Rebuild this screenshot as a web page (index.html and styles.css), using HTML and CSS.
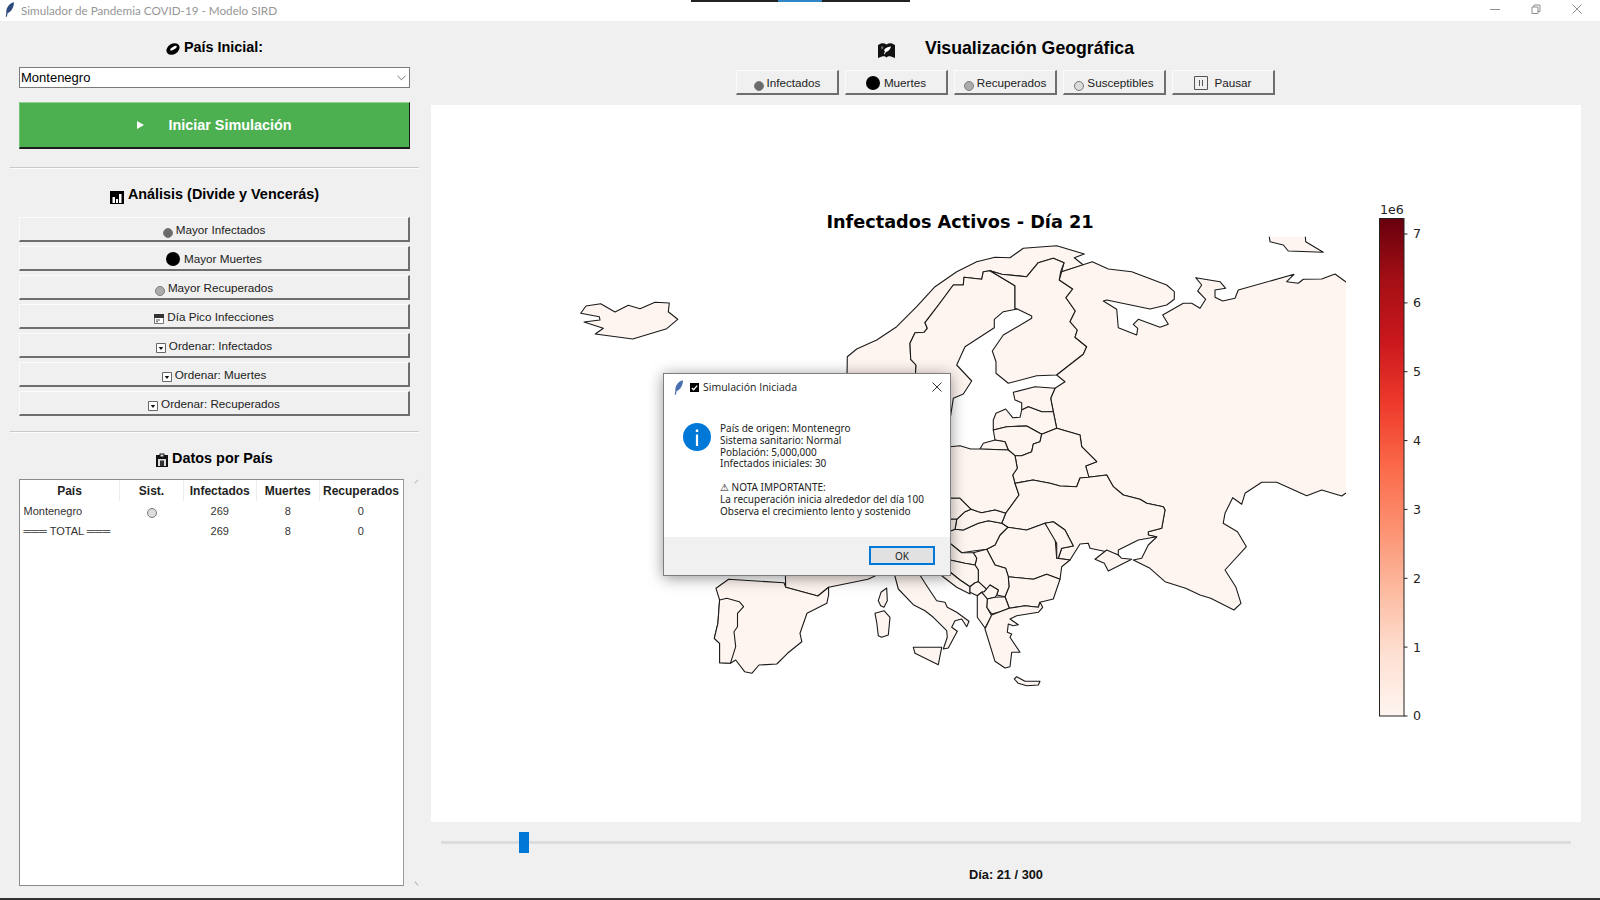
FILE: index.html
```html
<!DOCTYPE html>
<html lang="es">
<head>
<meta charset="utf-8">
<title>Simulador de Pandemia COVID-19 - Modelo SIRD</title>
<link rel="stylesheet" href="styles.css">
</head>
<body>
<div class="app">
  <header class="titlebar">
    <svg class="feather" viewBox="0 0 10 16"><path d="M10 0C5 1 1 6 1.500 11.500L.8 16 2 16 3 12C7 11 10 5 10 0Z"/></svg>
    <span class="titlebar-text">Simulador de Pandemia COVID-19 - Modelo SIRD</span>
    <div class="taskstrip"><span class="taskstrip-blue"></span></div>
    <div class="winctl">
      <svg class="winbtn" viewBox="0 0 10 10"><path d="M0 5.500H10"/></svg>
      <svg class="winbtn" viewBox="0 0 10 10"><path d="M1 3H7V9.500H1ZM3 3V1H9V7.500H7"/></svg>
      <svg class="winbtn" viewBox="0 0 10 10"><path d="M.5 .5L9.500 9.500M9.500 .5L.5 9.500"/></svg>
    </div>
  </header>

  <main class="main">
    <aside class="left">
      <h2 class="head head-first">
        <svg class="ico-head" viewBox="0 0 14 14"><ellipse cx="7" cy="7" rx="7" ry="5.200" fill="#000" transform="rotate(-32 7 7)"/><ellipse cx="7.500" cy="6.200" rx="3.800" ry="1.300" fill="#fff" transform="rotate(-32 7.500 6.200)"/></svg>
        <span>País Inicial:</span>
      </h2>
      <div class="combo"><span>Montenegro</span><svg class="combo-arrow" viewBox="0 0 10 6"><path d="M.5 .5L5 5L9.500 .5"/></svg></div>
      <button class="start"><span class="start-arrow"></span><span>Iniciar Simulación</span></button>
      <div class="sep sep-a"></div>
      <h2 class="head">
        <svg class="ico-head ico-low" viewBox="0 0 14 14"><path d="M0 1H14V14H0Z" fill="#000"/><path d="M2.500 7H5V13H2.500ZM6 9H8V13H6ZM9 4H11.500V13H9Z" fill="#fff"/></svg>
        <span>Análisis (Divide y Vencerás)</span>
      </h2>
      <div class="btn-list">
        <button class="raised"><i class="dot dot-inf"></i><span>Mayor Infectados</span></button>
        <button class="raised"><i class="dot dot-mue"></i><span>Mayor Muertes</span></button>
        <button class="raised"><i class="dot dot-rec"></i><span>Mayor Recuperados</span></button>
        <button class="raised">
          <svg class="ico-small" viewBox="0 0 10 10"><path d="M.5 .5H9.500V9.500H.5Z" fill="#fff" stroke="#777"/><path d="M0 0H10V4H0Z" fill="#333"/><path d="M2 6H6M2 7.800H4" stroke="#555"/></svg>
          <span>Día Pico Infecciones</span>
        </button>
        <button class="raised"><svg class="ico-small" viewBox="0 0 10 10"><path d="M.5 .5H9.500V9.500H.5Z" fill="#fff" stroke="#666"/><path d="M2.800 4H7.200L5 7Z" fill="#111"/></svg><span>Ordenar: Infectados</span></button>
        <button class="raised"><svg class="ico-small" viewBox="0 0 10 10"><path d="M.5 .5H9.500V9.500H.5Z" fill="#fff" stroke="#666"/><path d="M2.800 4H7.200L5 7Z" fill="#111"/></svg><span>Ordenar: Muertes</span></button>
        <button class="raised"><svg class="ico-small" viewBox="0 0 10 10"><path d="M.5 .5H9.500V9.500H.5Z" fill="#fff" stroke="#666"/><path d="M2.800 4H7.200L5 7Z" fill="#111"/></svg><span>Ordenar: Recuperados</span></button>
      </div>
      <div class="sep sep-b"></div>
      <h2 class="head">
        <svg class="ico-head ico-clip" viewBox="0 0 12 14"><path d="M0 2H3.500V.5H8.500V2H12V14H0Z" fill="#111"/><path d="M4.500 1.500H7.500V3.500H4.500ZM2 6H10V13H2Z" fill="#ddd"/><path d="M4 7.500H8V13H4Z" fill="#333"/></svg>
        <span>Datos por País</span>
      </h2>
      <div class="tree">
        <table class="tree-table">
          <colgroup><col class="c1"><col class="c2"><col class="c3"><col class="c4"><col class="c5"></colgroup>
          <thead>
            <tr><th>País</th><th>Sist.</th><th>Infectados</th><th>Muertes</th><th>Recuperados</th></tr>
          </thead>
          <tbody>
            <tr><td class="name">Montenegro</td><td><i class="dot dot-sus dot-cell"></i></td><td>269</td><td>8</td><td>0</td></tr>
            <tr><td class="name">═══ TOTAL ═══</td><td></td><td>269</td><td>8</td><td>0</td></tr>
          </tbody>
        </table>
      </div>
      <i class="grip grip-top"></i>
      <i class="grip grip-bottom"></i>
    </aside>

    <section class="right">
      <h1 class="geo-title">
        <svg class="ico-map" viewBox="0 0 17 15"><path d="M0 2L3 0.500C5 0 7 .5 8.500 1.500C10 .5 12 0 14 .5L17 2V15L13 13.500C11 13 9.500 13.500 8.500 14.500C7.500 13.500 6 13 4 13.500L0 15Z" fill="#111"/><path d="M6 7C8 4 11 3.500 13 3.500C12.500 6 10.500 8.500 8 9L6.500 11.500L6 10.500L7 8.500Z" fill="#fff"/><path d="M3 3.500H5.500L5 6H3.500Z" fill="#777"/></svg>
        <span>Visualización Geográfica</span>
      </h1>
      <div class="tabs">
        <button class="raised tab"><i class="dot dot-inf"></i><span>Infectados</span></button>
        <button class="raised tab"><i class="dot dot-mue"></i><span>Muertes</span></button>
        <button class="raised tab"><i class="dot dot-rec"></i><span>Recuperados</span></button>
        <button class="raised tab"><i class="dot dot-sus"></i><span>Susceptibles</span></button>
        <button class="raised tab"><svg class="ico-pause" viewBox="0 0 14 14"><path d="M.5 .5H13.500V13.500H.5Z" fill="none" stroke="#555"/><path d="M5.500 4V10M8.500 4V10" stroke="#555"/></svg><span>Pausar</span></button>
      </div>
      <div class="canvas">
        <svg class="map" viewBox="431 105 1150 717">
          <defs>
            <clipPath id="mapclip"><rect x="431" y="236.700" width="915" height="500"/></clipPath>
            <linearGradient id="reds" x1="0" y1="1" x2="0" y2="0">
              <stop offset="0" stop-color="#fff5f0"/><stop offset=".125" stop-color="#fee0d2"/>
              <stop offset=".25" stop-color="#fcbba1"/><stop offset=".375" stop-color="#fc9272"/>
              <stop offset=".5" stop-color="#fb6a4a"/><stop offset=".625" stop-color="#ef3b2c"/>
              <stop offset=".75" stop-color="#cb181d"/><stop offset=".875" stop-color="#a50f15"/>
              <stop offset="1" stop-color="#67000d"/>
            </linearGradient>
          </defs>
          <text class="chart-title" x="960" y="228" text-anchor="middle">Infectados Activos - Día 21</text>
          <g class="land" clip-path="url(#mapclip)">
            <polygon points="580.7,313.3 586,306 600.7,303.700 615,312 628.300,305.300 640,308.700 655,302.300 669.300,303 668.300,311.700 677.700,319.300 666.700,328.700 632.700,339 595.300,334 603.300,328.300 584,322 600,320 599.300,316.700"/>
            <polygon points="846.700,400 847.300,356.700 856.700,349 876.700,340 896.700,326.700 916.700,306.700 935,286.700 956.700,271.700 976.700,261.700 995,257.300 1010,257.700 1023.300,248.300 1056.700,245.700 1084.300,254 1074.300,257.700 1083.300,265 1061.700,271.700 1064,262.700 1053.300,258.300 1038.300,262.700 1026.700,276.700 1001.700,274.300 990,270.700 983.300,271.700 981.700,279.300 964,277.300 963.300,285 953.300,285 940,303 925,322.700 927.300,328.300 924,332.300 915,332.700 910,343.300 910.700,359.300 916,365 914,400"/>
            <polygon points="914,420 914,400 916,365 910.700,359.300 910,343.300 915,332.700 924,332.300 927.300,328.300 925,322.700 940,303 953.300,285 963.300,285 964,277.300 981.700,279.300 983.300,271.700 990,270.700 1015,285.700 1015,308.300 1017.300,309 1003.300,311.700 994.300,319.300 994.300,327.700 965,346.700 956.700,365 971.700,381 963.300,394 953.300,398.300 950,420 945,430"/>
            <polygon points="990,270.700 1001.700,274.300 1026.700,276.700 1038.300,262.700 1053.300,258.300 1064,262.700 1060.700,271.700 1059.300,280 1072.700,289 1066,297.700 1075.300,311 1070,321.700 1077.300,330 1075,337.300 1086.700,346.700 1083.300,354.300 1056.700,375 1036.700,375.700 1008.300,383.300 996,373.300 996,361.700 992.300,351 1003.300,335 1031.700,318.300 1031.700,316 1017.300,309 1015,308.300 1015,285.700"/>
            <polygon points="1061.700,271.700 1092.300,261.700 1108.300,269 1131.700,271.700 1166.700,285 1174.300,291.700 1174.300,299.300 1166.700,305 1150,309 1106.700,300 1103.300,301 1116.700,309.300 1118.300,327.700 1136.700,335 1137.700,328.300 1133.300,324.300 1138.300,319.300 1160,327.300 1168.300,324.300 1162.700,315 1183.300,303.300 1191.700,303.300 1200,308.300 1205.700,299.300 1197.700,291 1201.700,285 1195.700,277.700 1220,281.700 1225.700,288.300 1215,290 1215,297.300 1222.700,301 1235,298.300 1238.300,290 1294,274.300 1286.700,281.700 1298.300,283.300 1303.300,279.300 1321.700,279 1335,274 1345.700,281.700 1360,290 1360,500 1345.700,493.300 1341.700,496 1321.700,490 1306.700,495.700 1276.700,482.300 1261.700,482.300 1245,493.300 1241.700,504.300 1232.700,497.700 1225,513.300 1223.200,523.300 1237.500,531.700 1246.400,546.700 1225,570 1235.700,586.700 1241,603.300 1233.900,610 1210.700,598.300 1200,595 1185.700,588.300 1165,581.700 1150,568.300 1133.300,560 1141.700,558.300 1148.300,545 1156.700,537 1148.300,535 1148.300,531.700 1161.700,528.300 1165,510 1163.300,506.700 1146.700,503.300 1140,499.300 1123.300,495 1113.300,486.700 1106.700,475 1088.300,477.300 1085.700,466 1096.700,461.700 1081.700,446.700 1080,435 1056.700,428.300 1053.300,411.700 1050.700,398.300 1055,388.300 1065,381.700 1056.700,375 1083.300,354.300 1086.700,346.700 1075,337.300 1077.300,330 1070,321.700 1075.300,311 1066,297.700 1072.700,289 1059.300,280"/>
            <polygon points="1268.300,230 1270,241.700 1283.300,245 1288.300,251 1323.300,252.300 1305.700,241.700 1305,230"/>
            <polygon points="1013.300,392.300 1035,386.700 1055,388.300 1050.700,398.300 1053.300,411.700 1041.700,411.700 1028.300,406.700 1021.700,410 1021.700,402.700 1015,400"/>
            <polygon points="993.300,430 993.300,420 996,413.300 1005.700,409 1012.700,417.700 1020,417.300 1021.700,410 1028.300,406.700 1041.700,411.700 1053.300,411.700 1056.700,428.300 1041.700,434.300 1026.700,426 1006.700,426.700"/>
            <polygon points="993.300,430 1006.700,426.700 1026.700,426 1041.700,434.300 1040,441.700 1033.300,444 1031.700,451.700 1021.700,455.700 1015,455.700 1008.300,450 1005,441.700 995,440"/>
            <polygon points="980,449 983.300,443.300 995,440 1005,441.700 1008.300,450"/>
            <polygon points="1056.700,428.300 1080,435 1081.700,446.700 1096.700,461.700 1085.700,466 1089,477.300 1080,478 1076.700,486.700 1060,486 1050,483.300 1033,480 1015,483.300 1012.700,475 1017.300,468.300 1015,455.700 1021.700,455.700 1031.700,451.700 1033.300,444 1040,441.700 1041.700,434.300"/>
            <polygon points="940,446 950,446.700 960,445.700 970.700,449 980,449 1008.300,450 1015,455.700 1017.300,468.300 1012.700,475 1015,483.300 1019,495 1005.700,513.300 995,510 981.700,512.700 978,511.700 971,509.300 960,498.300 950,498.300 940,480"/>
            <polygon points="1015,483.300 1033,480 1050,483.300 1060,486 1076.700,486.700 1080,478 1088.300,477.300 1106.700,475 1113.300,486.700 1123.300,495 1140,499.300 1146.700,503.300 1163.300,506.700 1165,510 1161.700,528.300 1148.300,531.700 1148.300,535 1156.700,536.700 1138.300,540 1118.300,550 1118.300,555 1106.700,551.700 1090,548.300 1088.300,543.300 1080,544 1070,560 1058.300,558.300 1061.700,548.300 1073.300,546 1065,530 1053.300,521.700 1045,523.300 1026.700,530 1007.700,527.300 1001.700,523.300 1005.700,513.300 1019,495"/>
            <polygon points="1095,559.300 1106.700,550 1118.300,555 1121.700,558.300 1131.700,559.300 1108.300,571 1104.300,563.300"/>
            <polygon points="1007.700,527.300 1026.700,530 1045,523.300 1055,536.700 1056.700,558.300 1070,560 1061.700,566.700 1060,579.300 1046.700,574.300 1033.300,579.300 1008.300,576.700 1005.700,568.300 995,565 986.700,549.300 995,545 1000,535"/>
            <polygon points="1045,523.300 1053.300,521.700 1065,530 1073.300,546 1061.700,548.300 1058.300,558.300 1056.700,558.300 1056.700,543.300"/>
            <polygon points="1008.300,576.700 1033.300,579.300 1046.700,574.300 1060,579.300 1053.300,599 1040,602.300 1038.300,607.300 1025,605.700 1009.300,608.300 1005,596.700 1009,586.700"/>
            <polygon points="955,529.300 963.300,530 978.300,523.300 988.300,520.700 1001.700,523.300 1007.700,527.300 1000,535 995,545 986.700,549.300 973.300,551 961.700,552.700 950,543.300 940,535"/>
            <polygon points="956.700,519.300 965,511.700 971,509.300 978,511.700 981.700,512.700 995,510 1005.700,513.300 1001.700,523.300 988.300,520.700 978.300,523.300 963.300,530 955,529.300"/>
            <polygon points="940,480 950,498.300 960,498.300 971,509.300 965,511.700 956.700,519.300 940,519"/>
            <polygon points="940,519 956.700,519.300 955,529.300 940,535"/>
            <polygon points="973.300,552.700 986.700,549.300 995,565 1005.700,568.300 1008.300,576.700 1009,586.700 1005,596.700 996.700,595 998.300,590 990,585 986.700,589.300 978.300,581.700 978.300,570 975,565 976.700,558.300"/>
            <polygon points="940,535 950,543.300 961.700,552.700 973.300,552.700 976.700,558.300 975,565 965,563.300 950,560 940,558"/>
            <polygon points="940,558 950,560 965,563.300 975,565 978.300,570 978.300,581.700 975,582.700 970,586.700 960,580 950,572 940,570"/>
            <polygon points="925,560 950,572 960,580 970,586.700 970,594 956.700,587.300 941.700,575.700"/>
            <polygon points="970,586.700 975,582.700 978.300,581.700 986.700,589.300 984.300,591.700 981.700,592.300 977.300,595.700 970,592.300"/>
            <polygon points="984.300,591.700 990,585 998.300,590 996.700,595 995,597.300 987.300,599 981.700,592.300"/>
            <polygon points="987.300,599 995,597.300 1005,596.700 1009.300,608.300 1000,611.700 991.700,614 986.700,607.300"/>
            <polygon points="977.300,595.700 981.700,592.300 987.300,599 986.700,607.300 991.700,615.700 985,628 977.300,617.300"/>
            <polygon points="985,629 991.700,615 1000,611.700 1009.300,608.300 1025,605.700 1038.300,607.300 1040,602.300 1042.700,607.300 1038.300,612.300 1016.700,615.700 1010,619 1018.300,624.700 1013.300,625.700 1008.300,624 1007.300,632.300 1011.700,634 1010,637.300 1020,652.300 1011.700,652.300 1010,666.700 1005,668 995,661.300"/>
            <polygon points="893.300,570 898.300,589 913.300,604.700 925,610.700 933.300,617.300 946.700,630.700 947.300,637.300 943.300,649 948.300,648 957.300,631.300 951.700,627.300 955,620.700 961.700,619 966.700,626.700 969,621.300 956.700,612.300 947.300,607.300 945,602.300 936.700,600.700 926.700,585.700 916.700,570"/>
            <polygon points="913.300,647.300 915,653.300 938.300,664.700 941.700,647.300"/>
            <polygon points="875,613.300 884,610.700 890,617.300 888.300,635 881.700,637.300 878.300,635.700 876.700,622.300"/>
            <polygon points="878.300,600.700 881,592.300 886.700,588 887.300,600.700 884,607.300 880.700,605.700"/>
            <polygon points="1014.300,679 1016.700,676.700 1025,681.300 1040,681.300 1038.300,685 1026.700,685.700 1018.300,683.300"/>
            <polygon points="785,560 785.700,587.300 817.900,596 828.600,587.300 867.900,579.300 875,576 880,560"/>
            <polygon points="716,588.300 728.600,579.300 784,582.700 785.700,587.300 817.900,596 828.600,587.300 828.600,595 826.800,603.300 807,613.300 800,633.300 801.800,641.700 787.500,653.300 776.800,664 759,665 751.800,673.300 744.600,671.700 735.700,660 730.400,663.300 719.600,662.700 719.600,643.300 714.300,638.300 717.900,623.300 719.600,600"/>
            <polygon points="719.600,600 726.800,598.300 739.300,601.700 743.600,606.700 737.500,613.300 737.500,626.700 734,631.700 735.700,646.700 730.400,663.300 719.600,662.700 719.600,643.300 714.300,638.300 717.900,623.300"/>
          </g>
          <rect class="cbar" x="1379.500" y="218.500" width="24.500" height="497.500"/>
          <path class="ticks" d="M1404 716h3.500M1404 647.100h3.500M1404 578.300h3.500M1404 509.400h3.500M1404 440.600h3.500M1404 371.700h3.500M1404 302.900h3.500M1404 234h3.500"/>
          <g class="cbar-labels">
            <text x="1380" y="214">1e6</text>
            <text x="1413" y="720">0</text><text x="1413" y="651.500">1</text><text x="1413" y="582.600">2</text><text x="1413" y="513.800">3</text>
            <text x="1413" y="444.900">4</text><text x="1413" y="376">5</text><text x="1413" y="307.200">6</text><text x="1413" y="238">7</text>
          </g>
        </svg>
      </div>
      <div class="slider"><div class="slider-track"><div class="slider-thumb"></div></div></div>
      <div class="day">Día: 21 / 300</div>
    </section>
  </main>
  <div class="bottom-edge"></div>

  <div class="dialog">
    <div class="dlg-head">
      <svg class="dlg-feather" viewBox="0 0 10 16"><path d="M10 0C5 1 1 6 1.500 11.500L.8 16 2 16 3 12C7 11 10 5 10 0Z"/></svg>
      <svg class="dlg-check" viewBox="0 0 10 10"><path d="M0 0H10V10H0Z" fill="#000"/><path d="M2 5.500L4 7.500L8 3" fill="none" stroke="#fff" stroke-width="1.400"/></svg>
      <span class="dlg-title">Simulación Iniciada</span>
      <svg class="dlg-close" viewBox="0 0 11 11"><path d="M.5 .5L10.500 10.500M10.500 .5L.5 10.500"/></svg>
    </div>
    <div class="dlg-body">
      <svg class="dlg-info" viewBox="0 0 28 28"><circle cx="14" cy="14" r="14" fill="#0078d7"/><path d="M12.900 11.500H15.100V23H12.900ZM12.800 6.500H15.200V9H12.800Z" fill="#fff"/></svg>
      <div class="dlg-text">
        <div>País de origen: Montenegro</div>
        <div>Sistema sanitario: Normal</div>
        <div>Población: 5,000,000</div>
        <div>Infectados iniciales: 30</div>
        <div class="blank">&nbsp;</div>
        <div>⚠ NOTA IMPORTANTE:</div>
        <div>La recuperación inicia alrededor del día 100</div>
        <div>Observa el crecimiento lento y sostenido</div>
      </div>
    </div>
    <div class="dlg-foot"><button class="ok">OK</button></div>
  </div>
</div>
</body>
</html>
```

FILE: styles.css
```css
* { box-sizing: border-box; }
html, body { margin: 0; padding: 0; }
body { font-family: "Liberation Sans", Arial, sans-serif; background: #f0f0f0; color: #000; }
.app { width: 1600px; height: 900px; display: flex; flex-direction: column; position: relative; overflow: hidden; }

.titlebar { height: 21px; background: #fff; display: flex; align-items: center; position: relative; padding-left: 5px; flex: none; }
.feather { width: 9px; height: 15px; fill: #2c4a7d; margin-right: 7px; margin-bottom: 2px; }
.titlebar-text { font: 11.700px Lato, "Liberation Sans", sans-serif; color: #969696; margin-bottom: 2px; }
.taskstrip { position: absolute; left: 691px; top: 0; width: 219px; height: 1.500px; background: #222; }
.taskstrip-blue { position: absolute; left: 87px; top: 0; width: 44px; height: 100%; background: #2f86c8; }
.winctl { margin-left: auto; display: flex; padding-right: 18px; gap: 31px; margin-top: -3px; }
.winbtn { width: 10px; height: 10px; fill: none; stroke: #8f8f8f; stroke-width: 1; }

.main { flex: 1; display: flex; min-height: 0; }
.left { width: 431px; flex: none; padding: 0 21px 0 19px; position: relative; display: flex; flex-direction: column; }
.head { margin: 0; height: 26px; display: flex; align-items: center; justify-content: center; gap: 4px; font-size: 14.400px; font-weight: 700; color: #000; }
.head-first { margin-top: 13px; }
.ico-head { width: 14px; height: 14px; flex: none; margin-top: 3px; }
.ico-low { margin-top: 5px; }
.ico-clip { width: 12px; margin-top: 4px; }

.combo { margin-top: 7px; height: 21px; background: #fff; border: 1px solid #7a7a7a; display: flex; align-items: center; justify-content: space-between; padding: 0 3px 0 1px; font-size: 13px; color: #000; }
.combo-arrow { width: 9px; height: 6px; fill: none; stroke: #666; stroke-width: 1; }

.start { margin-top: 14px; height: 47px; width: 100%; background: #4caf50; border: 0; border-top: 1px solid #8fd393; border-left: 1px solid #6fc473; border-right: 1px solid #1c1c1c; border-bottom: 2px solid #1c1c1c; color: #fff; font: 700 14.400px "Liberation Sans", Arial, sans-serif; display: flex; align-items: center; justify-content: center; gap: 24px; padding: 0; }
.start-arrow { width: 0; height: 0; border-left: 7px solid #fff; border-top: 4px solid transparent; border-bottom: 4px solid transparent; }

.sep { height: 2px; margin-left: -9px; margin-right: -9px; background: linear-gradient(#c9c9c9 50%, #fbfbfb 50%); flex: none; }
.sep-a { margin-top: 18px; margin-bottom: 12px; }
.sep-b { margin-top: 15px; margin-bottom: 12px; }

.btn-list { margin-top: 10px; display: flex; flex-direction: column; gap: 4px; }
.raised { height: 25px; background: #f0f0f0; border: 0; border-top: 1px solid #fbfbfb; border-left: 1px solid #fbfbfb; border-right: 2px solid #6e6e6e; border-bottom: 2px solid #6e6e6e; font: 11.700px "Liberation Sans", Arial, sans-serif; color: #222; display: flex; align-items: center; justify-content: center; gap: 3px; padding: 1px 0 0; }
.dot { display: block; border-radius: 50%; flex: none; }
.dot-inf { width: 10px; height: 10px; background: #6a6a6a; border: 1px solid #7b7b7b; margin-top: 6px; }
.dot-mue { width: 14px; height: 14px; background: #000; margin-top: 0; margin-right: 1px; }
.dot-rec { width: 10px; height: 10px; background: #ababab; border: 1px solid #7d7d7d; margin-top: 6px; }
.dot-sus { width: 10px; height: 10px; background: #dcdcdc; border: 1px solid #777; margin-top: 6px; }
.dot-cell { margin: 3px auto 0; }
.ico-small { width: 10px; height: 10px; flex: none; margin-top: 5px; }

.tree { margin-top: 8px; width: 384.500px; height: 407px; background: #fff; border: 1px solid #8a8a8a; border-right-color: #9d9d9d; overflow: hidden; }
.tree-table { border-collapse: collapse; table-layout: fixed; width: 382px; }
.c1 { width: 99.500px; } .c2 { width: 64px; } .c3 { width: 72.500px; } .c4 { width: 63.500px; } .c5 { width: 82.500px; }
.tree-table th { font: 700 12px "Liberation Sans", Arial, sans-serif; color: #222; height: 21px; padding: 0; text-align: center; border-right: 1px solid #ececec; }
.tree-table th:last-child { border-right: 0; }
.tree-table td { font: 11px "Liberation Sans", Arial, sans-serif; color: #333; height: 20px; padding: 0; text-align: center; white-space: nowrap; }
.tree-table td.name { text-align: left; padding-left: 3.500px; }
.grip { position: absolute; left: 414px; width: 5px; height: 1px; background: #b5b5b5; transform: rotate(-45deg); }
.grip-top { top: 460px; }
.grip-bottom { top: 862px; transform: rotate(50deg); }

.right { flex: 1; display: flex; flex-direction: column; padding-right: 19px; min-width: 0; }
.geo-title { margin: 14px 0 0; height: 27px; display: flex; align-items: center; justify-content: center; gap: 30px; font-size: 17.700px; font-weight: 700; color: #000; }
.ico-map { width: 17px; height: 15px; flex: none; margin-top: 4px; }
.tabs { margin-top: 8px; display: flex; justify-content: center; gap: 6px; padding-right: 1px; }
.tab { width: 103px; }
.tab .dot-mue { margin-top: 0; }
.ico-pause { width: 14px; height: 14px; flex: none; margin-right: 3px; }

.canvas { margin-top: 10px; height: 717px; background: #fff; flex: none; }
.map { display: block; width: 1150px; height: 717px; }
.chart-title { font: 700 17.700px "DejaVu Sans", sans-serif; fill: #000; }
.land polygon { fill: #fff5f0; stroke: #1a1a1a; stroke-width: 1.100; stroke-linejoin: round; }
.cbar { fill: url(#reds); stroke: #222; stroke-width: 1; }
.ticks { stroke: #222; stroke-width: 1; fill: none; }
.cbar-labels text { font: 12.600px "DejaVu Sans", sans-serif; fill: #222; }

.slider { height: 21px; margin-top: 10px; padding: 0 10px; flex: none; }
.slider-track { position: relative; height: 3px; top: 9px; background: #dcdcdc; }
.slider-thumb { position: absolute; left: 78px; top: -9px; width: 10px; height: 21px; background: #0078d7; }
.day { margin-top: 14px; text-align: center; font-size: 12.800px; font-weight: 700; color: #111; line-height: 16px; }

.bottom-edge { height: 2px; background: #333; flex: none; }

.dialog { position: absolute; left: 663px; top: 373px; width: 288px; height: 203px; background: #fff; border: 1px solid #7e7e7e; box-shadow: 0 2px 14px rgba(0,0,0,.42); display: flex; flex-direction: column; }
.dlg-head { height: 26px; display: flex; align-items: center; padding: 0 8px 0 10px; flex: none; }
.dlg-feather { width: 9px; height: 15px; fill: #4a6fb0; margin-right: 7px; }
.dlg-check { width: 9px; height: 9px; margin-right: 4px; }
.dlg-title { font: 10.500px "Open Sans", "Noto Sans", sans-serif; color: #222; }
.dlg-close { width: 10px; height: 10px; margin-left: auto; fill: none; stroke: #222; stroke-width: 1; }
.dlg-body { flex: 1; display: flex; padding: 23px 0 0 19px; gap: 9px; }
.dlg-info { width: 28px; height: 28px; flex: none; }
.dlg-text { font: 10px "Noto Sans", "Open Sans", sans-serif; line-height: 11.800px; color: #222; white-space: nowrap; }
.dlg-foot { height: 38px; background: #f0f0f0; flex: none; display: flex; justify-content: flex-end; align-items: flex-start; padding: 9px 15px 0 0; }
.ok { width: 66px; height: 19px; background: #e1e1e1; border: 2px solid #0078d7; font: 10px "Noto Sans", sans-serif; color: #222; padding: 0; }
```
